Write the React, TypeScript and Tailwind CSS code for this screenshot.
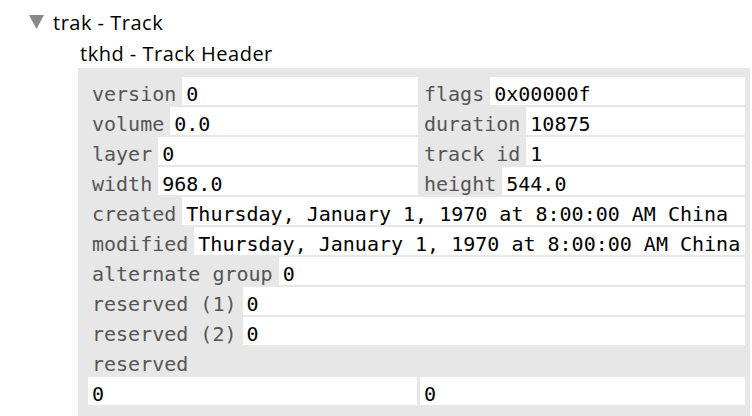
import React from 'react';

const mono = "font-['DejaVu_Sans_Mono',monospace] text-[20px] leading-none";

type Field = { label: string; value: string };

function Cell({ label, value }: Field) {
  return (
    <div className="flex h-[28px] items-stretch min-w-0">
      <span className="flex items-center pl-1 pr-[6px] pt-[5px] text-[#555] whitespace-nowrap">{label}</span>
      <span className="flex flex-1 items-center bg-white px-1 pt-[5px] text-black whitespace-nowrap overflow-hidden">
        {value}
      </span>
    </div>
  );
}

function HalfRow({ left, right }: { left: Field; right: Field }) {
  return (
    <div className="grid grid-cols-[330px_325px] gap-x-[2px]">
      <Cell {...left} />
      <Cell {...right} />
    </div>
  );
}

export default function App() {
  return (
    <div className="h-[416px] w-[752px] overflow-hidden bg-white pt-[8px] font-['Open_Sans',sans-serif] text-black">
      <div className="flex h-[30px] items-center pl-[29px]">
        <svg width="15" height="14" viewBox="0 0 15 14" className="mt-[-2px]">
          <polygon points="0,0 15,0 7.5,14" fill="#8a8a8a" />
        </svg>
        <span className="ml-[9px] text-[20px] tracking-[0.5px]">trak - Track</span>
      </div>
      <div className="flex h-[30px] items-center pl-[80px] pt-[2px] text-[20px] tracking-[0.5px]">
        tkhd - Track Header
      </div>
      <div className={`ml-[78px] w-[672px] bg-[#e7e7e7] pt-[9px] pl-[10px] ${mono}`}>
        <div className="flex w-[657px] flex-col gap-[2px]">
          <HalfRow left={{ label: 'version', value: '0' }} right={{ label: 'flags', value: '0x00000f' }} />
          <HalfRow left={{ label: 'volume', value: '0.0' }} right={{ label: 'duration', value: '10875' }} />
          <HalfRow left={{ label: 'layer', value: '0' }} right={{ label: 'track id', value: '1' }} />
          <HalfRow left={{ label: 'width', value: '968.0' }} right={{ label: 'height', value: '544.0' }} />
          <Cell label="created" value="Thursday, January 1, 1970 at 8:00:00 AM China" />
          <Cell label="modified" value="Thursday, January 1, 1970 at 8:00:00 AM China" />
          <Cell label="alternate group" value="0" />
          <Cell label="reserved (1)" value="0" />
          <Cell label="reserved (2)" value="0" />
          <div className="flex h-[28px] items-center pl-1 pt-[5px] text-[#555]">reserved</div>
          <div className="grid grid-cols-[329px_325px] gap-x-[3px]">
            <span className="flex h-[28px] items-center bg-white px-1 pt-[5px]">0</span>
            <span className="flex h-[28px] items-center bg-white px-1 pt-[5px]">0</span>
          </div>
          <div className="flex h-[28px] items-center pl-1 pt-[5px] text-[#555]">matrix</div>
        </div>
      </div>
    </div>
  );
}
